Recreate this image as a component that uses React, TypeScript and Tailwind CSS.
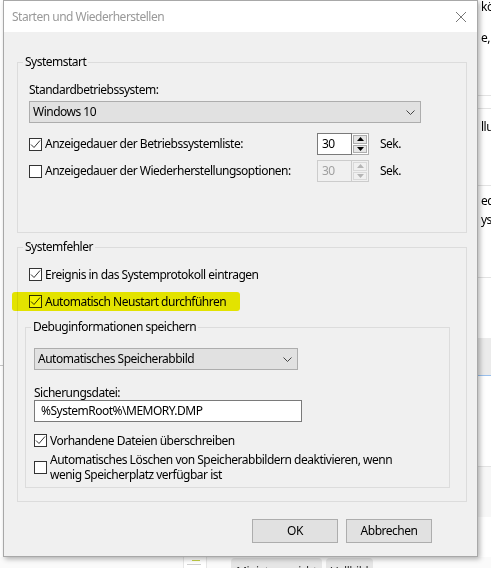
import React from "react";

const font = { fontFamily: '"Noto Sans", "Liberation Sans", sans-serif' };

function Check({ checked }: { checked?: boolean }) {
  return (
    <span className="flex h-[13px] w-[13px] shrink-0 items-center justify-center border border-[#333333] bg-white">
      {checked && (
        <svg width="11" height="11" viewBox="0 0 11 11">
          <path d="M1 5.5 L4 8.5 L10 1.5" fill="none" stroke="#333333" strokeWidth="1" />
        </svg>
      )}
    </span>
  );
}

function Chevron() {
  return (
    <svg width="9" height="5" viewBox="0 0 9 5">
      <path d="M0.5 0.5 L4.5 4.5 L8.5 0.5" fill="none" stroke="#444444" strokeWidth="1" />
    </svg>
  );
}

function Select({ value, width }: { value: string; width: string }) {
  return (
    <div className={`flex h-[22px] items-center justify-between border border-[#adadad] bg-[#e1e1e1] pl-[3px] pr-[5px] ${width}`}>
      <span>{value}</span>
      <Chevron />
    </div>
  );
}

function Arrow({ up, disabled }: { up?: boolean; disabled?: boolean }) {
  return (
    <div
      className={`flex flex-1 items-center justify-center border ${
        disabled ? "border-[#d9d9d9] bg-[#f0f0f0]" : "border-[#adadad] bg-[#e5e5e5]"
      }`}
    >
      <svg width="7" height="4" viewBox="0 0 7 4">
        <path
          d={up ? "M0 4 L3.5 0 L7 4 Z" : "M0 0 L3.5 4 L7 0 Z"}
          fill={disabled ? "#b5b5b5" : "#000000"}
        />
      </svg>
    </div>
  );
}

function Spin({ disabled }: { disabled?: boolean }) {
  return (
    <div className="flex h-[22px] w-[52px]">
      <div
        className={`flex w-[35px] items-center border pl-[4px] ${
          disabled ? "border-[#cccccc] bg-[#f0f0f0] text-[#a0a0a0]" : "border-[#7a7a7a] bg-white text-black"
        }`}
      >
        30
      </div>
      <div
        className={`flex w-[17px] flex-col gap-[1px] border-y border-r p-[1px] ${
          disabled ? "border-[#cccccc] bg-[#f0f0f0]" : "border-[#adadad] bg-white"
        }`}
      >
        <Arrow up disabled={disabled} />
        <Arrow disabled={disabled} />
      </div>
    </div>
  );
}

function Group({
  title,
  className,
  children,
}: {
  title: string;
  className: string;
  children: React.ReactNode;
}) {
  return (
    <div className={`relative border border-[#dcdcdc] ${className}`}>
      <span className="absolute -top-[9px] left-[5px] bg-[#f0f0f0] px-[2px] leading-[16px]">{title}</span>
      {children}
    </div>
  );
}

export default function App() {
  return (
    <div
      className="relative h-[568px] w-[491px] overflow-hidden bg-white text-[12px] tracking-[-0.5px] text-black"
      style={font}
    >
      {/* background window, right edge */}
      <div className="absolute left-[478px] top-0 h-[557px] w-[13px] overflow-hidden whitespace-nowrap leading-[14px]">
        <div className="absolute left-[3px] top-0">kör</div>
        <div className="absolute left-[3px] top-[31px]">e, F</div>
        <div className="absolute left-0 top-[95px] h-px w-full bg-[#e3e3e3]" />
        <div className="absolute left-0 top-[108px] h-px w-full bg-[#e3e3e3]" />
        <div className="absolute left-[3px] top-[120px]">llun</div>
        <div className="absolute left-0 top-[185px] h-px w-full bg-[#e3e3e3]" />
        <div className="absolute left-[3px] top-[194px]">ed</div>
        <div className="absolute left-[3px] top-[213px]">yste</div>
        <div className="absolute left-0 top-[277px] h-px w-full bg-[#e3e3e3]" />
        <div className="absolute left-0 top-[338px] h-[38px] w-full border-b border-[#99c0ee] bg-[#ebebeb]" />
        <div className="absolute left-0 top-[466px] h-[51px] w-full border-t border-[#e3e3e3] bg-[#f7f7f7]" />
      </div>
      {/* background window, bottom edge */}
      <div className="absolute left-0 top-[557px] h-[11px] w-[491px] bg-[#fafafa]">
        <div className="absolute left-[183px] top-0 h-[11px] w-[24px] border-x border-[#e6e6e6] bg-white">
          <div className="ml-[8px] mt-[3px] h-px w-[8px] bg-[#c8d44a]" />
          <div className="ml-[3px] mt-[3px] h-px w-[14px] bg-[#d0d0d0]" />
        </div>
        <div className="absolute left-[231px] top-[1px] h-[14px] w-[91px] rounded-t-[4px] bg-[#e6e6e6] pt-[7px] text-center leading-[14px] text-[#333333]">
          Miniaturansicht
        </div>
        <div className="absolute left-[326px] top-[1px] h-[14px] w-[47px] rounded-t-[4px] bg-[#e6e6e6] pt-[7px] text-center leading-[14px] text-[#333333]">
          Vollbild
        </div>
      </div>
      <div className="absolute left-0 top-[365px] h-px w-[3px] bg-[#c8c8c8]" />

      {/* dialog */}
      <div className="absolute left-[3px] top-0 flex h-[557px] w-[475px] flex-col border border-[#a8a8a8] bg-[#f0f0f0] shadow-[2px_2px_5px_rgba(0,0,0,0.3)]">
        <div className="flex h-[31px] shrink-0 items-center justify-between bg-white pl-[8px] pr-[11px]">
          <span className="text-[#999999]">Starten und Wiederherstellen</span>
          <svg width="10" height="10" viewBox="0 0 10 10">
            <path d="M0 0 L10 10 M10 0 L0 10" stroke="#777777" strokeWidth="1" />
          </svg>
        </div>

        <div className="flex flex-col pt-[30px]">
          <Group title="Systemstart" className="ml-[13px] h-[171px] w-[450px] pl-[11px] pt-[19px]">
            <div className="leading-[16px]">Standardbetriebssystem:</div>
            <Select value="Windows 10" width="mt-[3px] w-[392px]" />
            <div className="mt-[10px] flex h-[22px] items-center">
              <div className="flex w-[288px] items-center">
                <Check checked />
                <span className="ml-[3px]">Anzeigedauer der Betriebssystemliste:</span>
              </div>
              <Spin />
              <span className="ml-[11px]">Sek.</span>
            </div>
            <div className="mt-[5px] flex h-[22px] items-center">
              <div className="flex w-[288px] items-center">
                <Check />
                <span className="ml-[3px]">Anzeigedauer der Wiederherstellungsoptionen:</span>
              </div>
              <Spin disabled />
              <span className="ml-[11px]">Sek.</span>
            </div>
          </Group>

          <Group title="Systemfehler" className="ml-[13px] mt-[14px] h-[255px] w-[450px] pl-[7px] pt-[19px]">
            <div className="ml-[4px] flex h-[15px] items-center">
              <Check checked />
              <span className="ml-[3px]">Ereignis in das Systemprotokoll eintragen</span>
            </div>
            <div className="relative ml-[4px] mt-[12px] flex h-[15px] items-center">
              <Check checked />
              <span className="ml-[3px]">Automatisch Neustart durchführen</span>
              <span className="pointer-events-none absolute -left-[17px] -top-[2px] z-10 h-[19px] w-[228px] rounded-[3px] bg-[#f2f200] mix-blend-multiply" />
            </div>

            <Group title="Debuginformationen speichern" className="mt-[18px] h-[161px] w-[425px] pl-[8px] pt-[20px]">
              <Select value="Automatisches Speicherabbild" width="w-[264px]" />
              <div className="mt-[16px] leading-[14px]">Sicherungsdatei:</div>
              <div className="flex h-[22px] w-[268px] items-center border border-[#7a7a7a] bg-white pl-[6px]">
                %SystemRoot%\MEMORY.DMP
              </div>
              <div className="mt-[11px] flex h-[15px] items-center">
                <Check checked />
                <span className="ml-[3px]">Vorhandene Dateien überschreiben</span>
              </div>
              <div className="mt-[4px] flex items-center">
                <Check />
                <span className="ml-[3px] leading-[15px]">
                  Automatisches Löschen von Speicherabbildern deaktivieren, wenn
                  <br />
                  wenig Speicherplatz verfügbar ist
                </span>
              </div>
            </Group>
          </Group>

          <div className="mt-[17px] flex justify-end gap-[8px] pr-[45px]">
            <button className="h-[24px] w-[86px] border border-[#adadad] bg-[#e1e1e1]">OK</button>
            <button className="h-[24px] w-[86px] border border-[#adadad] bg-[#e1e1e1]">Abbrechen</button>
          </div>
        </div>
      </div>
    </div>
  );
}
